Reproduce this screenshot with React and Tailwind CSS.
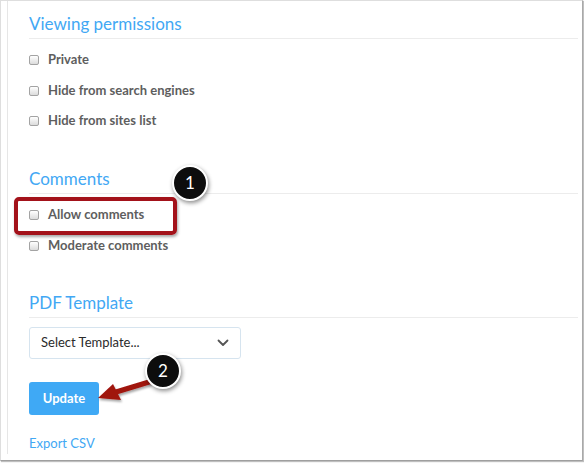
import React from "react";

const Check = ({ label }) => (
  <label className="flex items-center h-[20px] gap-[9px]">
    <span className="block w-[10px] h-[10px] rounded-[2px] border border-[#a3a3a3] bg-gradient-to-b from-white to-[#dcdcdc]" />
    <span className="text-[13px] font-bold text-[#5e5e5e]">{label}</span>
  </label>
);

const Heading = ({ children, className = "" }) => (
  <div
    className={
      "text-[17px] leading-[24px] pb-[2px] border-b border-[#ececec] text-[#42a8f4] " +
      className
    }
  >
    {children}
  </div>
);

// numbered callout bubble
const Bubble = ({ n, className }) => (
  <div
    className={
      "absolute w-[36px] h-[36px] rounded-full bg-[#0d0d0d] border-2 border-white shadow-[1px_2px_4px_rgba(0,0,0,0.45)] flex items-center justify-center text-white text-[17px] " +
      className
    }
  >
    {n}
  </div>
);

export default function App() {
  return (
    <div
      className="relative w-[584px] h-[463px] bg-white overflow-hidden"
      style={{ fontFamily: "Lato, 'Open Sans', sans-serif" }}
    >
      <div className="w-[583px] h-[461px] border-l border-t border-[#dedede] border-r border-b border-r-[#a9a9a9] border-b-[#9f9f9f] shadow-[1px_1px_1px_rgba(0,0,0,0.25)]">
        <div className="ml-[6px] h-[453px] border-l border-[#e6e6e6] pl-[21px] pr-[4px] flex flex-col">
          <Heading className="mt-[11px]">Viewing permissions</Heading>
          <div className="mt-[11px] flex flex-col gap-[10.5px]">
            <Check label="Private" />
            <Check label="Hide from search engines" />
            <Check label="Hide from sites list" />
          </div>

          <Heading className="mt-[36px]">Comments</Heading>
          <div className="mt-[11px] flex flex-col gap-[11px]">
            <Check label="Allow comments" />
            <Check label="Moderate comments" />
          </div>

          <Heading className="mt-[35px]">PDF Template</Heading>
          <div className="mt-[9px] w-[212px] h-[32px] rounded-[3px] border border-[#d6e4ef] flex items-center justify-between pl-[11px] pr-[11px] text-[13px] text-[#2b2b2b]">
            <span>Select Template...</span>
            <svg width="12" height="8" viewBox="0 0 12 8" fill="none">
              <path d="M1.5 1.5 L6 6 L10.5 1.5" stroke="#555" strokeWidth="1.8" strokeLinecap="round" strokeLinejoin="round" />
            </svg>
          </div>

          <button className="mt-[23px] w-[70px] h-[33px] rounded-[3px] bg-[#3fa9f5] text-white text-[13px] font-bold">
            Update
          </button>

          <a className="mt-[18px] leading-[20px] text-[13px] text-[#42a8f4]">Export CSV</a>
        </div>
      </div>

      {/* annotations */}
      <div className="absolute left-[14px] top-[197px] w-[163px] h-[38px] rounded-[5px] border-4 border-[#a3121a] shadow-[1px_2px_3px_rgba(0,0,0,0.35)]" />
      <Bubble n="1" className="left-[172px] top-[165px]" />

      <svg className="absolute left-0 top-0" width="584" height="463" viewBox="0 0 584 463">
        <defs>
          <filter id="sh" x="-20%" y="-20%" width="140%" height="140%">
            <feDropShadow dx="1" dy="2" stdDeviation="1.2" floodColor="#000" floodOpacity="0.35" />
          </filter>
        </defs>
        <g filter="url(#sh)">
          <path d="M149 382 L116 392" stroke="#a0140f" strokeWidth="5" strokeLinecap="round" />
          <path d="M98 398 L113 384 L121 400 Z" fill="#a0140f" />
        </g>
      </svg>
      <Bubble n="2" className="left-[145px] top-[353px]" />
    </div>
  );
}
